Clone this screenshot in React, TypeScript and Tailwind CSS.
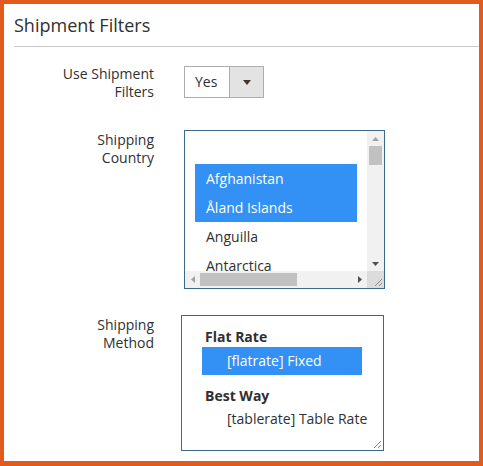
import React from 'react'

const font = "font-['Open_Sans','Liberation_Sans',sans-serif]"

function Grip() {
  return (
    <svg width="10" height="10" viewBox="0 0 10 10" className="block">
      <path d="M9 2 L2 9 M9 6 L6 9" stroke="#8a8a8a" strokeWidth="1" />
    </svg>
  )
}

function CountryList() {
  const items = ['Afghanistan', 'Åland Islands', 'Anguilla', 'Antarctica']
  return (
    <div className="grid h-[159px] w-[201px] grid-cols-[1fr_17px] grid-rows-[1fr_17px] border border-[#3c6a8a] bg-white">
      <div className="overflow-hidden pt-[33px]">
        {items.map((name, i) => (
          <div
            key={name}
            className={
              'mx-[10px] flex h-[29px] items-center pl-[11px] text-[14px] ' +
              (i < 2 ? 'bg-[#3390f5] text-white' : 'text-[#303030]')
            }
          >
            {name}
          </div>
        ))}
      </div>
      {/* vertical scrollbar */}
      <div className="flex flex-col items-center bg-[#f1f1f1]">
        <div className="flex h-[15px] items-center justify-center">
          <svg width="7" height="4" viewBox="0 0 7 4"><path d="M0 4 L3.5 0 L7 4Z" fill="#a3a3a3" /></svg>
        </div>
        <div className="h-[19px] w-[13px] bg-[#c1c1c1]" />
        <div className="flex-1" />
        <div className="flex h-[15px] items-center justify-center">
          <svg width="7" height="4" viewBox="0 0 7 4"><path d="M0 0 L3.5 4 L7 0Z" fill="#505050" /></svg>
        </div>
      </div>
      {/* horizontal scrollbar */}
      <div className="flex items-center bg-[#f1f1f1]">
        <div className="flex w-[15px] items-center justify-center">
          <svg width="4" height="7" viewBox="0 0 4 7"><path d="M4 0 L0 3.5 L4 7Z" fill="#a3a3a3" /></svg>
        </div>
        <div className="h-[13px] w-[97px] bg-[#c1c1c1]" />
        <div className="flex-1" />
        <div className="flex w-[15px] items-center justify-center">
          <svg width="4" height="7" viewBox="0 0 4 7"><path d="M0 0 L4 3.5 L0 7Z" fill="#505050" /></svg>
        </div>
      </div>
      <div className="flex items-end justify-end bg-[#dcdcdc] p-[1px]">
        <Grip />
      </div>
    </div>
  )
}

function MethodList() {
  return (
    <div className="relative ml-[-3px] h-[136px] w-[203px] border border-[#3c6a8a] bg-white px-[20px] pt-[12px] text-[14px] leading-[18px] text-[#303030]">
      <div className="pl-[3px] font-bold">Flat Rate</div>
      <div className="mt-[1px] flex h-[28px] w-[160px] items-center bg-[#3390f5] pl-[25px] text-white">
        [flatrate] Fixed
      </div>
      <div className="mt-[12px] pl-[3px] font-bold">Best Way</div>
      <div className="flex h-[28px] items-center whitespace-nowrap pl-[25px]">[tablerate] Table Rate</div>
      <div className="absolute right-[1px] bottom-[1px]">
        <Grip />
      </div>
    </div>
  )
}

export default function App() {
  return (
    <div className={`${font} h-[466px] w-[483px] border-t-4 border-r-4 border-b-[5px] border-l-4 border-[#e35b1c] bg-white text-[#303030]`}>
      <div className="pl-[10px]">
        <h2 className="pt-[10px] pb-[9px] text-[18px] leading-[23px]">Shipment Filters</h2>
        <div className="h-px bg-[#c8c8c8]" />
      </div>

      <div className="flex flex-col pl-[10px] text-[14px] leading-[18px]">
        <div className="mt-[18px] flex gap-[30px]">
          <div className="w-[140px] text-right">Use Shipment<br />Filters</div>
          <div className="mt-[1px] flex h-[32px] w-[80px] border border-[#adadad]">
            <div className="flex flex-1 items-center pl-[10px]">Yes</div>
            <div className="flex w-[34px] items-center justify-center border-l border-[#adadad] bg-[#e3e3e3]">
              <svg width="8" height="5" viewBox="0 0 8 5"><path d="M0 0 L8 0 L4 5Z" fill="#41362f" /></svg>
            </div>
          </div>
        </div>

        <div className="mt-[29px] flex gap-[30px]">
          <div className="w-[140px] pt-[1px] text-right">Shipping<br />Country</div>
          <CountryList />
        </div>

        <div className="mt-[26px] flex gap-[30px]">
          <div className="w-[140px] pt-[1px] text-right">Shipping<br />Method</div>
          <MethodList />
        </div>
      </div>
    </div>
  )
}
